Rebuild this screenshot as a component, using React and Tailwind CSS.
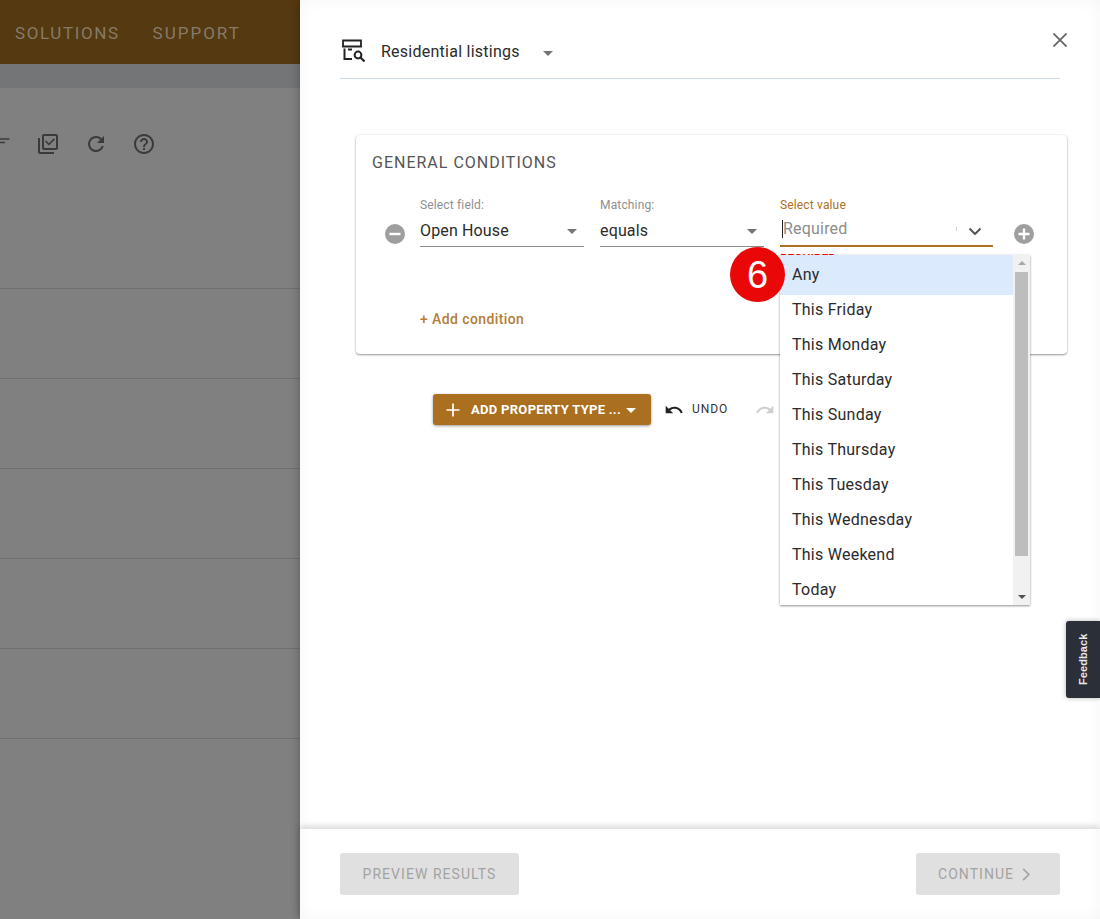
import React from "react";

function Caret({ className = "" }) {
  return (
    <svg viewBox="0 0 10 5" className={`w-[10px] h-[5px] ${className}`}>
      <path d="M0 0h10L5 5z" fill="currentColor" />
    </svg>
  );
}

function Select({ label, value, width }) {
  return (
    <div className={`${width} flex flex-col`}>
      <span className="text-[12px] leading-[14px] text-[#8f8f8f] tracking-[0.15px]">{label}</span>
      <div className="h-[34px] mt-[1px] pt-[3px] flex items-center justify-between border-b border-[#8c8c8c] pr-[7px]">
        <span className="text-[16px] tracking-[0.15px] text-[#2b2b2b]">{value}</span>
        <Caret className="text-[#757575]" />
      </div>
    </div>
  );
}

const options = ["Any","This Friday","This Monday","This Saturday","This Sunday","This Thursday","This Tuesday","This Wednesday","This Weekend","Today"];

export default function App() {
  return (
    <div className="relative w-[1100px] h-[919px] overflow-hidden flex bg-white font-['Roboto',sans-serif]">
      {/* Dimmed page */}
      <div className="w-[300px] h-full shrink-0 flex flex-col bg-[#808080]">
        <div className="h-[64px] shrink-0 bg-[#553910] flex items-center gap-[33px] pl-[15px] pt-[3px] text-[17px] text-[#857b68]">
          <span className="tracking-[1.6px]">SOLUTIONS</span>
          <span className="tracking-[2px]">SUPPORT</span>
        </div>
        <div className="h-[24px] shrink-0 bg-[#747576]" />
        <div className="h-[111px] shrink-0 flex items-center gap-[24px] pl-[36px] relative text-[#3a3a3a]">
          <svg viewBox="0 0 10 10" className="absolute left-0 top-[50px] w-[10px] h-[10px]">
            <path d="M0 1h9.5M0 4.5h5" stroke="currentColor" strokeWidth="1.6" fill="none" />
          </svg>
          <svg viewBox="0 0 24 24" className="w-[24px] h-[24px]" fill="currentColor">
            <path d="M4 6H2v14c0 1.1.9 2 2 2h14v-2H4V6zm16-4H8c-1.1 0-2 .9-2 2v12c0 1.1.9 2 2 2h12c1.1 0 2-.9 2-2V4c0-1.1-.9-2-2-2zm0 14H8V4h12v12zm-7.1-2.5L9 9.6l1.1-1.1 2.8 2.8 5-5L19 7.4z" />
          </svg>
          <svg viewBox="0 0 24 24" className="w-[24px] h-[24px]" fill="currentColor">
            <path d="M17.65 6.35A7.96 7.96 0 0 0 12 4a8 8 0 1 0 7.73 10h-2.08A6 6 0 1 1 12 6c1.66 0 3.14.69 4.22 1.78L13 11h7V4l-2.35 2.35z" />
          </svg>
          <svg viewBox="0 0 24 24" className="w-[24px] h-[24px]" fill="currentColor">
            <path d="M11 18h2v-2h-2v2zm1-16C6.48 2 2 6.48 2 12s4.48 10 10 10 10-4.48 10-10S17.52 2 12 2zm0 18c-4.41 0-8-3.59-8-8s3.59-8 8-8 8 3.59 8 8-3.59 8-8 8zm0-14c-2.21 0-4 1.79-4 4h2c0-1.1.9-2 2-2s2 .9 2 2c0 2-3 1.75-3 5h2c0-2.25 3-2.5 3-5 0-2.21-1.79-4-4-4z" />
          </svg>
        </div>
        <div className="flex flex-col">
          {[0,1,2,3,4,5].map((i) => (
            <div key={i} className="h-[90px] border-b border-[#707070] box-border" />
          ))}
        </div>
      </div>

      {/* Drawer */}
      <div className="relative flex-1 h-full flex flex-col bg-white shadow-[0_0_10px_rgba(0,0,0,0.3),inset_0_0_16px_rgba(0,0,0,0.04)]">
        <div className="flex-1 flex flex-col px-[40px] min-h-0">
          <div className="h-[79px] shrink-0 border-b border-[#c5dcea] flex items-center pt-[26px] relative">
            <svg viewBox="0 0 24 24" className="w-[24px] h-[24px] ml-[2px] mb-[2px] text-[#222]" fill="none" stroke="currentColor">
              <path d="M1 1.500h18v6H1z" strokeWidth="1.800" />
              <path d="M2.500 9.500V20H10M6 10.500h4" strokeWidth="2" />
              <circle cx="16" cy="16" r="3.400" strokeWidth="2" />
              <path d="M18.500 18.500l4 4" strokeWidth="2.200" />
            </svg>
            <span className="ml-[15px] text-[16px] tracking-[0.25px] text-[#2b2b2b]">Residential listings</span>
            <Caret className="ml-[23px] mt-[3px] text-[#757575]" />
            <svg viewBox="0 0 14 14" className="absolute right-[-7px] top-[33px] w-[14px] h-[14px] text-[#666]" fill="none" stroke="currentColor" strokeWidth="1.800">
              <path d="M0.500 0.500l13 13M13.500 0.500l-13 13" />
            </svg>
          </div>

          <div className="ml-[16px] -mr-[7px] mt-[56px] h-[219px] shrink-0 rounded-[4px] bg-white shadow-[0_1px_2px_rgba(0,0,0,0.4),0_0_3px_rgba(0,0,0,0.08)] pt-[19px] pl-[16px]">
            <div className="text-[16px] leading-[18px] tracking-[1px] font-normal text-[#555]">GENERAL CONDITIONS</div>
            <div className="mt-[26px] flex items-start">
              <div className="w-[48px] shrink-0 pl-[13px] pt-[26px]">
                <svg viewBox="0 0 20 20" className="w-[20px] h-[20px]">
                  <circle cx="10" cy="10" r="10" fill="#9e9e9e" />
                  <rect x="4.500" y="8.800" width="11" height="2.400" fill="#fff" />
                </svg>
              </div>
              <Select label="Select field:" value="Open House" width="w-[164px]" />
              <div className="w-[16px] shrink-0" />
              <Select label="Matching:" value="equals" width="w-[164px]" />
              <div className="w-[16px] shrink-0" />
              <div className="w-[213px] shrink-0 flex flex-col">
                <span className="text-[12px] leading-[14px] text-[#ad6f20] tracking-[0.15px]">Select value</span>
                <div className="h-[34px] flex items-center border-b-2 border-[#ad6f20] pl-[2px] pr-[11px] mt-[1px]">
                  <span className="border-l border-[#222] text-[16px] leading-[18px] tracking-[0.2px] text-[#8c8c8c]">Required</span>
                  <span className="ml-auto mr-[11px] w-px h-[4px] bg-[#cfcfcf]" />
                  <svg viewBox="0 0 14 8" className="w-[14px] h-[8px] text-[#555] mt-[3px]" fill="none" stroke="currentColor" strokeWidth="2">
                    <path d="M1.500 1.500L7 7l5.500-5.500" />
                  </svg>
                </div>
                <span className="mt-[6px] text-[12px] leading-[12px] text-[#f00] font-medium">REQUIRED</span>
              </div>
              <div className="pl-[21px] pt-[26px]">
                <svg viewBox="0 0 20 20" className="w-[20px] h-[20px]">
                  <circle cx="10" cy="10" r="10" fill="#9e9e9e" />
                  <path d="M4.500 10h11M10 4.500v11" stroke="#fff" strokeWidth="2.400" />
                </svg>
              </div>
            </div>
            <div className="mt-[44px] ml-[48px] text-[14px] font-medium tracking-[0.4px] text-[#b57e38] leading-[20px]">+ Add condition</div>
          </div>

          <div className="mt-[40px] ml-[93px] flex items-start">
            <div className="w-[218px] h-[31px] rounded-[3px] bg-[#ab6f20] shadow-[0_1px_3px_rgba(0,0,0,0.4)] flex items-center pl-[13px] text-white">
              <svg viewBox="0 0 14 14" className="w-[14px] h-[14px]" fill="none" stroke="currentColor" strokeWidth="1.700">
                <path d="M0.500 7h13M7 0.500v13" />
              </svg>
              <span className="ml-[11px] text-[13px] font-bold tracking-[0.3px] whitespace-nowrap">ADD PROPERTY TYPE ...</span>
              <Caret className="ml-[5px] mt-[1px]" />
            </div>
            <svg viewBox="0 0 24 24" className="ml-[13px] mt-[6px] w-[20px] h-[20px] text-[#222]" fill="currentColor">
              <path d="M12.500 8c-2.650 0-5.050.99-6.900 2.600L2 7v9h9l-3.620-3.620c1.390-1.160 3.160-1.880 5.120-1.880 3.540 0 6.550 2.310 7.600 5.500l2.370-.78C21.080 11.030 17.150 8 12.500 8z" />
            </svg>
            <span className="ml-[8px] mt-[8px] text-[12px] leading-[14px] tracking-[0.9px] font-normal text-[#333]">UNDO</span>
            <svg viewBox="0 0 24 24" className="ml-[27px] mt-[6px] w-[20px] h-[20px] text-[#cfcfcf]" fill="currentColor">
              <path d="M18.400 10.600C16.550 8.990 14.150 8 11.500 8c-4.650 0-8.580 3.030-9.960 7.220L3.900 16c1.050-3.190 4.050-5.500 7.600-5.500 1.950 0 3.730.72 5.120 1.880L13 16h9V7l-3.600 3.600z" />
            </svg>
          </div>
        </div>

        <div className="h-[91px] shrink-0 border-t border-[#e4e4e4] shadow-[0_-2px_6px_rgba(0,0,0,0.15)] px-[40px] flex items-center justify-between pb-[1px]">
          <div className="w-[179px] h-[42px] rounded-[3px] bg-[#e0e0e0] flex items-center justify-center pt-[1px] text-[14px] font-normal tracking-[1.05px] text-[#a3a3a3]">PREVIEW RESULTS</div>
          <div className="w-[144px] h-[42px] rounded-[3px] bg-[#e0e0e0] flex items-center pl-[22px] pt-[1px] gap-[8px] text-[14px] font-normal tracking-[1.05px] text-[#a3a3a3]">
            <span>CONTINUE</span>
            <svg viewBox="0 0 8 14" className="w-[8px] h-[13px]" fill="none" stroke="currentColor" strokeWidth="1.800">
              <path d="M1 1l6 6-6 6" />
            </svg>
          </div>
        </div>
      </div>

      {/* Dropdown menu */}
      <div className="absolute left-[780px] top-[255px] w-[250px] h-[350px] bg-white shadow-[0_1px_2px_rgba(0,0,0,0.4),0_0_3px_rgba(0,0,0,0.08)] flex overflow-hidden">
        <div className="flex-1 flex flex-col">
          {options.map((o, i) => (
            <div key={o} className={`shrink-0 flex items-center pl-[12px] text-[16px] tracking-[0.25px] text-[#2b2b2b] ${i === 0 ? "h-[40px] bg-[#dbeafc]" : "h-[35px] pb-[6px]"}`}>{o}</div>
          ))}
        </div>
        <div className="w-[17px] bg-[#f1f1f1] flex flex-col items-center relative shrink-0">
          <svg viewBox="0 0 8 4" className="w-[8px] h-[4px] mt-[6px] text-[#a8a8a8]"><path d="M0 4h8L4 0z" fill="currentColor" /></svg>
          <div className="w-[13px] h-[284px] mt-[7px] bg-[#bdbdbd]" />
          <svg viewBox="0 0 8 4" className="w-[8px] h-[4px] mt-auto mb-[6px] text-[#505050]"><path d="M0 0h8L4 4z" fill="currentColor" /></svg>
        </div>
      </div>

      {/* Step badge */}
      <div className="absolute left-[730px] top-[247px] w-[55px] h-[55px] rounded-full bg-[#ea0707] flex items-center justify-center text-white text-[38px] leading-none font-['Liberation_Sans',sans-serif]">6</div>

      {/* Feedback tab */}
      <div className="absolute right-0 top-[621px] w-[34px] h-[77px] rounded-l-[3px] bg-[#2b2f38] shadow-[0_0_5px_rgba(0,0,0,0.3)] flex items-center justify-center">
        <span className="-rotate-90 text-[11px] font-bold tracking-[0.1px] text-[#e8e8e8] font-['Liberation_Sans',sans-serif]">Feedback</span>
      </div>
    </div>
  );
}
